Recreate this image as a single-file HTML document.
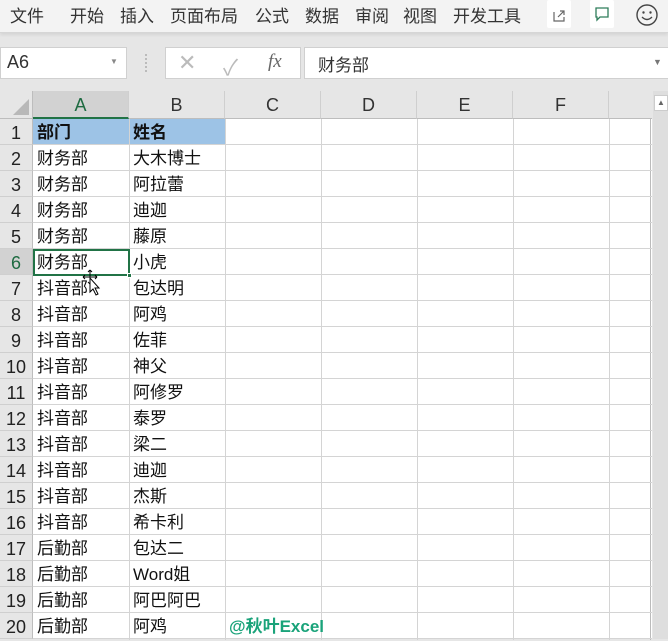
<!DOCTYPE html>
<html><head><meta charset="utf-8"><style>
*{margin:0;padding:0;box-sizing:border-box}
body{width:668px;height:639px;overflow:hidden;background:#e6e6e6;font-family:"Liberation Sans","Noto Sans CJK SC",sans-serif;position:relative}
.rib{position:absolute;left:0;top:0;width:668px;height:33px;background:#f3f3f3;border-bottom:1px solid #d6d6d6;box-shadow:0 2px 3px rgba(0,0,0,.08)}
.rib span{position:absolute;top:2px;font-size:17px;color:#333}
.btn{position:absolute;top:0;width:24px;height:28px;background:#fff;border-radius:2px}
.box{position:absolute;background:#fff;border:1px solid #d0d0d0;top:47px;height:32px}
.grid{position:absolute;left:0;top:91px;width:652px;height:548px;background:#fff}
.ch{position:absolute;top:0;height:28px;background:#e6e6e6;border-right:1px solid #cfcfcf;border-bottom:1px solid #bdbdbd;text-align:center;font-size:18px;line-height:28px;color:#333}
.rh{position:absolute;left:0;width:33px;height:26px;background:#e6e6e6;border-bottom:1px solid #cfcfcf;border-right:1px solid #bdbdbd;text-align:center;font-size:18px;line-height:28px;color:#222}
.vl{position:absolute;top:28px;width:1px;height:521px;background:#d4d4d4}
.hl{position:absolute;left:33px;width:619px;height:1px;background:#d4d4d4}
.c{position:absolute;font-size:17px;line-height:28px;color:#111;padding-left:4px}
</style></head><body>
<div class="rib">
<span style="left:10px">文件</span><span style="left:70px">开始</span><span style="left:120px">插入</span><span style="left:170px">页面布局</span><span style="left:255px">公式</span><span style="left:305px">数据</span><span style="left:355px">审阅</span><span style="left:403px">视图</span><span style="left:453px">开发工具</span>
<div class="btn" style="left:547px"><svg width="24" height="28"><path d="M7 12v9h10v-4M11 17l6-6M13 11h4v4" stroke="#666" fill="none" stroke-width="1.2"/></svg></div>
<div class="btn" style="left:590px"><svg width="24" height="28"><path d="M6 8h12v9h-8l-3 3v-3H6z" stroke="#2e7d5b" fill="none" stroke-width="1.3"/></svg></div>
<svg style="position:absolute;left:634px;top:2px" width="26" height="26"><circle cx="13" cy="13" r="10" stroke="#444" fill="none" stroke-width="1.4"/><circle cx="9.5" cy="10.5" r="1.2" fill="#444"/><circle cx="16.5" cy="10.5" r="1.2" fill="#444"/><path d="M8 15q5 5 10 0" stroke="#444" fill="none" stroke-width="1.3"/></svg>
</div>
<div class="box" style="left:0;width:127px"><span style="position:absolute;left:6px;top:4px;font-size:18px;color:#333">A6</span><span style="position:absolute;left:109px;top:9px;font-size:8px;color:#888">▼</span></div>
<div style="position:absolute;left:145px;top:54px;width:2px;height:18px;border-left:2px dotted #bbb"></div>
<div class="box" style="left:165px;width:136px"><span style="position:absolute;left:12px;top:2px;font-size:22px;color:#bbb">✕</span><span style="position:absolute;left:57px;top:2px;font-size:22px;color:#bbb">✓</span><span style="position:absolute;left:102px;top:3px;font-size:19px;font-style:italic;font-family:'Liberation Serif',serif;color:#666">fx</span></div>
<div class="box" style="left:304px;width:370px"><span style="position:absolute;left:13px;top:3px;font-size:17px;color:#333">财务部</span><span style="position:absolute;left:348px;top:9px;font-size:9px;color:#777">▼</span></div>
<div class="grid">
<div style="position:absolute;left:0;top:0;width:33px;height:28px;background:#e6e6e6;border-right:1px solid #bdbdbd;border-bottom:1px solid #bdbdbd"><svg width="33" height="28"><path d="M29 8V24H13z" fill="#b8b8b8"/></svg></div>
<div class="ch" style="left:33px;width:96px;background:#d2d2d2;color:#1e6b41;border-bottom:2px solid #217346">A</div>
<div class="ch" style="left:129px;width:96px">B</div><div class="ch" style="left:225px;width:96px">C</div><div class="ch" style="left:321px;width:96px">D</div><div class="ch" style="left:417px;width:96px">E</div><div class="ch" style="left:513px;width:96px">F</div><div class="ch" style="left:609px;width:43px;border-right:none"></div>
<div style="position:absolute;left:33px;top:28px;width:192px;height:26px;background:#9dc3e6"></div>
<div class="vl" style="left:129px"></div><div class="vl" style="left:225px"></div><div class="vl" style="left:321px"></div><div class="vl" style="left:417px"></div><div class="vl" style="left:513px"></div><div class="vl" style="left:609px"></div><div class="vl" style="left:650px;background:#bbb"></div>
<div id="rows"></div>
<div style="position:absolute;left:33px;top:158px;width:97px;height:27px;border:2px solid #217346"></div>
<div style="position:absolute;left:127px;top:182px;width:5px;height:5px;background:#217346;border:1px solid #fff"></div>
<svg style="position:absolute;left:80px;top:178px" width="24" height="30"><path d="M10 1v14M3 8h14M10 1l-2 2M10 1l2 2M3 8l2-2M3 8l2 2M17 8l-2-2M17 8l-2 2M10 15l-2-2M10 15l2-2" stroke="#000" stroke-width="1"/><path d="M10 9l0 14 3-3 3 6 2-1-3-6h4z" fill="#fff" stroke="#000" stroke-width="1"/></svg>
<div style="position:absolute;left:229px;top:522px;font-size:17px;font-weight:bold;color:#1aa37a;line-height:28px">@秋叶Excel</div>
</div>
<div style="position:absolute;left:653px;top:91px;width:15px;height:548px;background:#dedede"><div style="position:absolute;left:1px;top:4px;width:14px;height:16px;background:#fff;border:1px solid #ccc;font-size:8px;text-align:center;line-height:14px;color:#666">▲</div></div>
<script>
var d=[["部门","姓名"],["财务部","大木博士"],["财务部","阿拉蕾"],["财务部","迪迦"],["财务部","藤原"],["财务部","小虎"],["抖音部","包达明"],["抖音部","阿鸡"],["抖音部","佐菲"],["抖音部","神父"],["抖音部","阿修罗"],["抖音部","泰罗"],["抖音部","梁二"],["抖音部","迪迦"],["抖音部","杰斯"],["抖音部","希卡利"],["后勤部","包达二"],["后勤部","Word姐"],["后勤部","阿巴阿巴"],["后勤部","阿鸡"]];
var h="";for(var i=0;i<20;i++){var t=28+i*26;var sel=i==5;
h+='<div class="rh" style="top:'+t+'px;'+(sel?'background:#d2d2d2;color:#1e6b41':'')+'">'+(i+1)+'</div>';
h+='<div class="hl" style="top:'+(t+25)+'px"></div>';
var fw=i==0?'font-weight:bold;':'';
h+='<div class="c" style="left:33px;top:'+t+'px;'+fw+'">'+d[i][0]+'</div><div class="c" style="left:129px;top:'+t+'px;'+fw+'">'+d[i][1]+'</div>';}
document.getElementById("rows").innerHTML=h;
</script>
</body></html>
